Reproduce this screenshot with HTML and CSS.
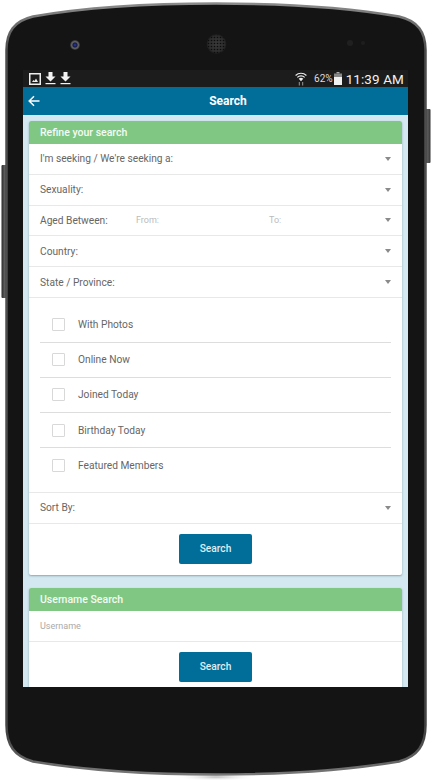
FILE: index.html
```html
<!DOCTYPE html>
<html lang="en">
<head>
<meta charset="utf-8">
<title>Search</title>
<link rel="stylesheet" href="styles.css">
</head>
<body>
<div class="device">
  <svg class="bezel" width="432" height="780" viewBox="0 0 432 780" aria-hidden="true">
    <defs>
      <linearGradient id="btn" x1="0" x2="1" y1="0" y2="0">
        <stop offset="0" stop-color="#2a2a2a"/><stop offset=".5" stop-color="#5c5c5c"/><stop offset="1" stop-color="#333"/>
      </linearGradient>
      <linearGradient id="edge" x1="0" x2="0" y1="0" y2="1">
        <stop offset="0" stop-color="#8a8a8a"/><stop offset=".06" stop-color="#4c4c4c"/><stop offset=".5" stop-color="#505050"/><stop offset=".95" stop-color="#444"/><stop offset="1" stop-color="#777"/>
      </linearGradient>
      <radialGradient id="lens"><stop offset="0" stop-color="#2a3cb0"/><stop offset=".4" stop-color="#161a40"/><stop offset=".65" stop-color="#6a6a6a"/><stop offset="1" stop-color="#2a2a2a"/></radialGradient>
      <radialGradient id="floor"><stop offset="0" stop-color="#bbb"/><stop offset="1" stop-color="#fff" stop-opacity="0"/></radialGradient>
      <radialGradient id="grill"><stop offset="0" stop-color="#3a3a3a"/><stop offset=".8" stop-color="#2c2c2c"/><stop offset="1" stop-color="#1a1a1a"/></radialGradient>
      <pattern id="holes" width="3" height="3" patternUnits="userSpaceOnUse"><circle cx="1.5" cy="1.5" r=".8" fill="#0c0c0c"/></pattern>
    </defs>
    <ellipse cx="216" cy="777" rx="40" ry="4" fill="url(#floor)"/>
    <rect x="1.5" y="165" width="6" height="133" rx="1" fill="url(#btn)"/>
    <rect x="425" y="109" width="5.5" height="54" rx="1" fill="url(#btn)"/>
    <path d="M6.500 50C6.500 32 14 21 33 16.500C90 6.500 150 3.500 216 3.500C282 3.500 342 6.500 399 16.500C418 21 425.500 32 425.500 50L425.500 725C425.500 745 418 756 399 761.500C342 771 282 774.500 216 774.500C150 774.500 90 771 33 761.500C14 756 6.500 745 6.500 725Z" fill="#141414" stroke="url(#edge)" stroke-width="2.500"/>
    <circle cx="75" cy="45" r="5" fill="url(#lens)"/>
    <circle cx="216.500" cy="44" r="10" fill="url(#grill)"/>
    <circle cx="216.500" cy="44" r="9.500" fill="url(#holes)"/>
    <circle cx="350" cy="43" r="3" fill="#202020"/>
    <circle cx="363" cy="43" r="2" fill="#1e1e1e"/>
  </svg>

  <main class="screen">
    <div class="statusbar">
      <div class="status-left">
        <svg class="ico-image" width="12" height="12" viewBox="0 0 12 12" aria-hidden="true"><rect x=".75" y=".75" width="10.500" height="10.500" fill="none" stroke="#eee" stroke-width="1.500"/><path d="M3 9l1.500-2 1 1 1.500-2.500L9 9Z" fill="#eee"/></svg>
        <svg class="ico-dl" width="11" height="13" viewBox="0 0 11 13" aria-hidden="true"><path d="M3.500 0h4v4.500h3L5.500 9.500.5 4.500h3Z" fill="#f4f4f4"/><rect x=".5" y="11" width="10" height="1.200" fill="#f4f4f4"/></svg>
        <svg class="ico-dl" width="11" height="13" viewBox="0 0 11 13" aria-hidden="true"><path d="M3.500 0h4v4.500h3L5.500 9.500.5 4.500h3Z" fill="#f4f4f4"/><rect x=".5" y="11" width="10" height="1.200" fill="#f4f4f4"/></svg>
      </div>
      <div class="status-right">
        <svg class="ico-wifi" width="12" height="14" viewBox="0 0 12 14" aria-hidden="true"><g fill="none" stroke="#eee" stroke-width="1.100"><path d="M.6 3.500a7.600 7.600 0 0 1 10.800 0"/><path d="M2.300 5.400a5.200 5.200 0 0 1 7.400 0"/></g><path d="M3.700 6.800a3.300 3.300 0 0 1 4.600 0L6 9.300Z" fill="#eee"/><path d="M4.300 10v3.500M7.700 10v3.500" stroke="#999" stroke-width="1"/></svg>
        <span class="battery-pct">62%</span>
        <svg class="ico-battery" width="8" height="13" viewBox="0 0 8 13" aria-hidden="true"><rect x="2.500" y="0" width="3" height="1.500" fill="#aaa"/><rect x="0" y="1.500" width="8" height="4" fill="#888"/><rect x="0" y="5" width="8" height="8" fill="#f2f2f2"/></svg>
        <span class="clock">11:39 AM</span>
      </div>
    </div>

    <header class="appbar">
      <button class="back" type="button" aria-label="Back">
        <svg width="12" height="12" viewBox="0 0 12 12" aria-hidden="true"><path d="M11.500 6H1.500M6 1.200L1.200 6 6 10.800" fill="none" stroke="#fff" stroke-width="1.500"/></svg>
      </button>
      <h1 class="title">Search</h1>
    </header>

    <div class="content">
      <section class="card">
        <h2 class="card-head">Refine your search</h2>
        <div class="row"><span class="label">I'm seeking / We're seeking a:</span><i class="caret"></i></div>
        <div class="row"><span class="label">Sexuality:</span><i class="caret"></i></div>
        <div class="row">
          <span class="label label-aged">Aged Between:</span>
          <span class="hint hint-from">From:</span>
          <span class="hint">To:</span>
          <i class="caret"></i>
        </div>
        <div class="row"><span class="label">Country:</span><i class="caret"></i></div>
        <div class="row"><span class="label">State / Province:</span><i class="caret"></i></div>
        <ul class="checks">
          <li class="check"><span class="box"></span>With Photos</li>
          <li class="check"><span class="box"></span>Online Now</li>
          <li class="check"><span class="box"></span>Joined Today</li>
          <li class="check"><span class="box"></span>Birthday Today</li>
          <li class="check"><span class="box"></span>Featured Members</li>
        </ul>
        <div class="row row-sort"><span class="label">Sort By:</span><i class="caret"></i></div>
        <div class="actions"><button class="btn" type="button">Search</button></div>
      </section>

      <section class="card">
        <h2 class="card-head">Username Search</h2>
        <div class="row"><span class="placeholder">Username</span></div>
        <div class="actions"><button class="btn" type="button">Search</button></div>
      </section>
    </div>
  </main>
</div>
</body>
</html>
```

FILE: styles.css
```css
* { box-sizing: border-box; }

html, body {
  margin: 0;
  padding: 0;
  background: #fff;
  overflow: hidden;
}

body {
  font-family: Roboto, "Liberation Sans", sans-serif;
}

.device {
  position: relative;
  width: 432px;
  height: 780px;
  padding: 70px 24px 0 23px;
}

.bezel {
  position: absolute;
  left: 0;
  top: 0;
}

.screen {
  position: relative;
  width: 385px;
  height: 617px;
  overflow: hidden;
  display: flex;
  flex-direction: column;
  background: #d3e8f0;
}

.statusbar {
  flex: 0 0 17px;
  display: flex;
  justify-content: space-between;
  align-items: center;
  background: #1c1c1c;
  padding: 0 4px 0 6px;
}

.status-left,
.status-right {
  display: flex;
  align-items: center;
}

.ico-image { margin-right: 4px; }
.ico-dl { margin-right: 4px; }
.ico-wifi { margin-right: 7px; }
.ico-battery { margin: 0 4px 0 1px; }

.battery-pct {
  font-size: 10px;
  color: #dcdcdc;
}

.clock {
  font-size: 13.500px;
  color: #f2f2f2;
  letter-spacing: 0.100px;
}

.appbar {
  flex: 0 0 28px;
  display: flex;
  align-items: center;
  background: #016d99;
}

.back {
  flex: 0 0 25px;
  display: flex;
  align-items: center;
  padding: 0 0 0 5px;
  height: 100%;
  background: none;
  border: 0;
}

.title {
  flex: 1;
  margin: 0;
  text-align: center;
  font-size: 12px;
  font-weight: 700;
  color: #fff;
}

.content {
  padding: 6px 6px 0;
  display: flex;
  flex-direction: column;
  gap: 13px;
}

.card {
  flex: none;
  background: #fff;
  border-radius: 2px;
  box-shadow: 0 1px 2px rgba(70, 100, 120, 0.500);
}

.card-head {
  margin: 0;
  height: 23px;
  line-height: 23px;
  padding-left: 11px;
  background: #81c784;
  color: #f4fbf4;
  font-size: 10.500px;
  font-weight: 500;
  border-radius: 2px 2px 0 0;
}

.row {
  height: 30.800px;
  display: flex;
  align-items: center;
  padding: 0 11px;
  border-bottom: 1px solid #e8e8e8;
  position: relative;
}

.label {
  font-size: 10.200px;
  color: #666;
}

.label-aged { width: 96px; flex: none; }

.hint {
  font-size: 9px;
  color: #bbb;
}

.hint-from { width: 133px; flex: none; }

.placeholder {
  font-size: 9px;
  color: #aaa;
}

.caret {
  margin-left: auto;
  margin-right: 0;
  width: 0;
  height: 0;
  border-left: 3.500px solid transparent;
  border-right: 3.500px solid transparent;
  border-top: 4px solid #8a8a8a;
}

.checks {
  list-style: none;
  margin: 0;
  padding: 9.500px 11px 8.600px;
  border-bottom: 1px solid #e8e8e8;
}

.check {
  height: 35.200px;
  display: flex;
  align-items: center;
  padding-left: 12px;
  font-size: 10.200px;
  color: #666;
  border-bottom: 1px solid #ddd;
}

.check:last-child { border-bottom: 0; }

.box {
  width: 13px;
  height: 13px;
  margin-right: 13px;
  border: 1px solid #d8d8d8;
  border-radius: 1px;
  flex: none;
}

.actions {
  height: 51px;
  display: flex;
  justify-content: center;
  align-items: flex-start;
  padding-top: 10px;
}

.btn {
  width: 73px;
  height: 30px;
  border: 0;
  border-radius: 2px;
  background: #016d99;
  color: #dfeef4;
  font: 500 10.200px Roboto, "Liberation Sans", sans-serif;
}
```
